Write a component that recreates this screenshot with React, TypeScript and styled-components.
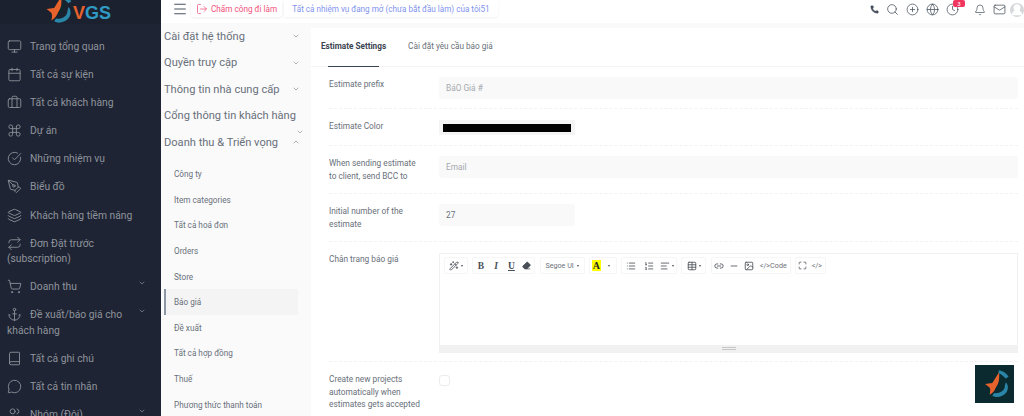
import styled, { createGlobalStyle } from "styled-components";
import {
  Anchor,
  AlignLeft,
  Bell,
  Book,
  Briefcase,
  Calendar,
  ChevronDown,
  ChevronUp,
  CircleCheckBig,
  CirclePlus,
  Clock,
  Command,
  Eraser,
  Globe,
  Image,
  Layers,
  Link2,
  List,
  ListOrdered,
  LogOut,
  Mail,
  Maximize,
  Menu,
  MessageCircle,
  Minus,
  Monitor,
  PenTool,
  Phone,
  Repeat,
  Search,
  ShoppingCart,
  Table,
  UserRound,
  Users,
  Wand2,
} from "lucide-react";

const GlobalStyle = createGlobalStyle`
  html, body {
    margin: 0;
    height: 416px;
    overflow: hidden;
    background: #fafafa;
    font-family: Roboto, "Open Sans", sans-serif;
  }
  * { box-sizing: border-box; }
`;

const FishMark = ({ size }: { size: number }) => (
  <svg width={size} height={size} viewBox="0 0 40 40">
    <path d="M9 20 L17 19 L25 6 C24 14 26 16 21 24 C19 29 16 31 14 32 C15 28 15 26 14 24 Z" fill="#e8622c" />
    <path d="M20 27 C23 20 27 16 27 11 C30 17 26 23 20 27 Z" fill="#0b2a30" />
    <path d="M24 5 C28 5 33 8 35 12 L32 14 C29 11 27 9 24 8 Z" fill="#2a86a8" />
    <path d="M32 18 C36 22 35 30 28 33 C24 35 20 35 17 33 L19 30 C24 31 31 28 31 22 Z" fill="#2a86a8" />
  </svg>
);

const sideItems = [
  { icon: Monitor, label: "Trang tổng quan" },
  { icon: Calendar, label: "Tất cả sự kiện" },
  { icon: Briefcase, label: "Tất cả khách hàng" },
  { icon: Command, label: "Dự án" },
  { icon: CircleCheckBig, label: "Những nhiệm vụ" },
  { icon: PenTool, label: "Biểu đồ" },
  { icon: Layers, label: "Khách hàng tiềm năng" },
  { icon: Repeat, label: "Đơn Đặt trước (subscription)" },
  { icon: ShoppingCart, label: "Doanh thu", arrow: true },
  { icon: Anchor, label: "Đề xuất/báo giá cho khách hàng", arrow: true },
  { icon: Book, label: "Tất cả ghi chú" },
  { icon: MessageCircle, label: "Tất cả tin nhắn" },
  { icon: Users, label: "Nhóm (Đội)", arrow: true },
];

const groups = [
  { label: "Cài đặt hệ thống" },
  { label: "Quyền truy cập" },
  { label: "Thông tin nhà cung cấp" },
  { label: "Cổng thông tin khách hàng", wrapped: true },
];

const subItems = [
  "Công ty",
  "Item categories",
  "Tất cả hoá đơn",
  "Orders",
  "Store",
  "Báo giá",
  "Đề xuất",
  "Tất cả hợp đồng",
  "Thuế",
  "Phương thức thanh toán",
];

const App = () => {
  return (
    <>
      <GlobalStyle />
      <Page>
        <Sidebar>
          <Brand>
            <FishMark size={38} />
            <BrandName>
              <b>V</b>GS
            </BrandName>
          </Brand>
          <SideList>
            {sideItems.map((item) => (
              <SideItem key={item.label}>
                <SideIcon>
                  <item.icon size={15} strokeWidth={1.4} />
                </SideIcon>
                {item.label}
                {item.arrow && (
                  <SideArrow>
                    <ChevronDown size={8} />
                  </SideArrow>
                )}
              </SideItem>
            ))}
          </SideList>
        </Sidebar>
        <Main>
          <TopBar>
            <Burger>
              <Menu size={16} strokeWidth={1.6} />
            </Burger>
            <ClockIn>
              <LogOut size={12} strokeWidth={1.5} />
              Chấm công đi làm
            </ClockIn>
            <TaskLink>Tất cả nhiệm vụ đang mở (chưa bắt đầu làm) của tôi51</TaskLink>
            <TopIcons>
              <Phone size={9} fill="#46505c" strokeWidth={1} />
              <Search size={13} strokeWidth={1.4} />
              <CirclePlus size={13} strokeWidth={1.4} />
              <Globe size={13} strokeWidth={1.4} />
              <ClockWrap>
                <Clock size={13} strokeWidth={1.4} />
                <Badge>3</Badge>
              </ClockWrap>
              <Bell size={12} strokeWidth={1.4} />
              <Mail size={13} strokeWidth={1.4} />
              <Avatar>
                <UserRound size={14} fill="#fff" stroke="#fff" />
              </Avatar>
            </TopIcons>
          </TopBar>
          <Body>
            <SettingsNav>
              {groups.map((g) => (
                <GroupRow key={g.label}>
                  {g.label}
                  <GroupChevron $wrapped={g.wrapped}>
                    <ChevronDown size={8} />
                  </GroupChevron>
                </GroupRow>
              ))}
              <GroupRow>
                Doanh thu & Triển vọng
                <GroupChevron>
                  <ChevronUp size={8} />
                </GroupChevron>
              </GroupRow>
              <SubList>
                {subItems.map((s) => (
                  <SubItem key={s} $active={s === "Báo giá"}>
                    {s}
                  </SubItem>
                ))}
              </SubList>
            </SettingsNav>
            <Card>
              <Tabs>
                <Tab $active>Estimate Settings</Tab>
                <Tab>Cài đặt yêu cầu báo giá</Tab>
              </Tabs>
              <Row $h={42}>
                <Label>Estimate prefix</Label>
                <Field>BáO Giá #</Field>
              </Row>
              <Row $h={37}>
                <Label>Estimate Color</Label>
                <Swatch>
                  <SwatchFill />
                </Swatch>
              </Row>
              <Row $h={48}>
                <Label>When sending estimate to client, send BCC to</Label>
                <Field>Email</Field>
              </Row>
              <Row $h={48}>
                <Label>Initial number of the estimate</Label>
                <Field $short $dark>
                  27
                </Field>
              </Row>
              <Row $h={120}>
                <Label>Chân trang báo giá</Label>
                <Editor>
                  <Toolbar>
                    <ToolGroup $w={24}>
                      <ToolBtn>
                        <Wand2 size={10} />
                        <Caret />
                      </ToolBtn>
                    </ToolGroup>
                    <ToolGroup $w={63}>
                      <ToolBtn>
                        <SerifLetter>B</SerifLetter>
                      </ToolBtn>
                      <ToolBtn>
                        <SerifLetter $italic>I</SerifLetter>
                      </ToolBtn>
                      <ToolBtn>
                        <SerifLetter $underline>U</SerifLetter>
                      </ToolBtn>
                      <ToolBtn>
                        <Eraser size={9} fill="#4a4f57" />
                      </ToolBtn>
                    </ToolGroup>
                    <ToolGroup $w={45}>
                      <ToolText>
                        Segoe UI
                        <Caret />
                      </ToolText>
                    </ToolGroup>
                    <ToolGroup $w={28}>
                      <ToolBtn>
                        <ColorA>A</ColorA>
                      </ToolBtn>
                      <ToolBtn>
                        <Caret />
                      </ToolBtn>
                    </ToolGroup>
                    <ToolGroup $w={56}>
                      <ToolBtn>
                        <List size={10} />
                      </ToolBtn>
                      <ToolBtn>
                        <ListOrdered size={10} />
                      </ToolBtn>
                      <ToolBtn>
                        <AlignLeft size={10} />
                        <Caret />
                      </ToolBtn>
                    </ToolGroup>
                    <ToolGroup $w={25}>
                      <ToolBtn>
                        <Table size={10} />
                        <Caret />
                      </ToolBtn>
                    </ToolGroup>
                    <ToolGroup $w={80}>
                      <ToolBtn>
                        <Link2 size={10} />
                      </ToolBtn>
                      <ToolBtn>
                        <Minus size={10} />
                      </ToolBtn>
                      <ToolBtn>
                        <Image size={10} />
                      </ToolBtn>
                      <ToolText>&lt;/&gt;Code</ToolText>
                    </ToolGroup>
                    <ToolGroup $w={31}>
                      <ToolBtn>
                        <Maximize size={9} />
                      </ToolBtn>
                      <ToolText>&lt;/&gt;</ToolText>
                    </ToolGroup>
                  </Toolbar>
                  <EditArea />
                  <Resizer>
                    <Grip />
                  </Resizer>
                </Editor>
              </Row>
              <Row $h={60} $last>
                <Label>Create new projects automatically when estimates gets accepted</Label>
                <Check />
              </Row>
            </Card>
          </Body>
        </Main>
        <FloatLogo>
          <FishMark size={36} />
        </FloatLogo>
      </Page>
    </>
  );
};

const Page = styled.div`
  display: flex;
  height: 416px;
  overflow: hidden;
  position: relative;
  width: 1024px;
`;

const Sidebar = styled.aside`
  background: #1e2433;
  color: #8e939c;
  flex: 0 0 161px;
  overflow: hidden;
`;

const Brand = styled.div`
  align-items: flex-end;
  background: #1b212e;
  display: flex;
  height: 24px;
  overflow: hidden;
  padding-left: 38px;

  svg {
    flex: none;
    margin-bottom: -4px;
  }
`;

const BrandName = styled.div`
  color: #2f9bc4;
  font-family: "Liberation Sans", sans-serif;
  font-size: 18px;
  font-weight: 700;
  line-height: 22px;
  margin-left: -3px;

  b {
    color: #e8622c;
  }
`;

const SideList = styled.div`
  padding-top: 9px;
`;

const SideItem = styled.div`
  font-size: 10.3px;
  line-height: 15.5px;
  padding: 6px 26px 6.6px 7px;
  position: relative;
`;

const SideIcon = styled.span`
  display: inline-block;
  height: 15px;
  margin-right: 8px;
  vertical-align: -4px;
  width: 15px;
`;

const SideArrow = styled.span`
  position: absolute;
  right: 15px;
  top: 3px;
`;

const Main = styled.div`
  display: flex;
  flex: 1;
  flex-direction: column;
  min-width: 0;
`;

const TopBar = styled.header`
  align-items: flex-start;
  background: #fff;
  display: flex;
  flex: 0 0 23px;
`;

const Burger = styled.div`
  color: #4a5260;
  margin: 1px 0 0 11px;
  width: 19px;
`;

const ClockIn = styled.div`
  align-items: center;
  background: #fff;
  border-radius: 0 0 3px 3px;
  box-shadow: 0 1px 3px rgba(0, 0, 0, 0.08);
  color: #f0527a;
  display: flex;
  font-size: 8.2px;
  gap: 3px;
  height: 17px;
  justify-content: center;
  width: 91px;
`;

const TaskLink = styled.div`
  align-items: center;
  background: #fff;
  border-radius: 0 0 3px 3px;
  box-shadow: 0 1px 3px rgba(0, 0, 0, 0.06);
  color: #7f93ee;
  display: flex;
  font-size: 8.15px;
  height: 17px;
  justify-content: center;
  margin-left: 2px;
  white-space: nowrap;
  width: 214px;
`;

const TopIcons = styled.div`
  align-items: center;
  color: #46505c;
  display: flex;
  gap: 7px;
  height: 19px;
  margin-left: auto;
`;

const ClockWrap = styled.div`
  display: flex;
  margin-right: 8px;
  position: relative;
`;

const Badge = styled.span`
  background: #f0365f;
  border-radius: 2px;
  color: #fff;
  font-size: 6px;
  left: 7px;
  line-height: 7px;
  position: absolute;
  text-align: center;
  top: -3px;
  width: 12px;
`;

const Avatar = styled.div`
  align-items: flex-end;
  background: #d5d7da;
  border-radius: 50%;
  display: flex;
  height: 14px;
  justify-content: center;
  margin-left: -3px;
  overflow: hidden;
  width: 14px;
`;

const Body = styled.div`
  display: flex;
  flex: 1;
  min-height: 0;
`;

const SettingsNav = styled.nav`
  color: #69707a;
  flex: 0 0 150px;
  min-width: 0;
  padding: 0 11px 0 3px;
`;

const GroupRow = styled.div`
  align-items: center;
  display: flex;
  font-size: 11.1px;
  height: 26.5px;
  justify-content: space-between;
  white-space: nowrap;
`;

const GroupChevron = styled.span<{ $wrapped?: boolean }>`
  align-self: ${(p) => (p.$wrapped ? "flex-end" : "center")};
  color: #8a9099;
  display: flex;
  margin-bottom: ${(p) => (p.$wrapped ? "-7px" : "0")};
`;

const SubList = styled.div`
  padding-top: 6px;
  width: 134px;
`;

const SubItem = styled.div<{ $active?: boolean }>`
  align-items: center;
  background: ${(p) => (p.$active ? "#f4f4f4" : "transparent")};
  border-left: 2px solid ${(p) => (p.$active ? "#8c97a5" : "transparent")};
  display: flex;
  font-size: 8.2px;
  height: 25.6px;
  padding-left: 8px;
  white-space: nowrap;
`;

const Card = styled.section`
  background: #fff;
  flex: 1;
  margin-top: 5px;
  min-width: 0;
  padding: 0 6px 0 18px;
`;

const Tabs = styled.div`
  border-bottom: 1px solid #f3f3f3;
  display: flex;
  gap: 22px;
  height: 39px;
  margin: 0 -6px 0 -18px;
  padding: 0 0 0 10px;
`;

const Tab = styled.div<{ $active?: boolean }>`
  align-items: center;
  color: ${(p) => (p.$active ? "#3a4350" : "#69707a")};
  display: flex;
  font-size: 8.2px;
  font-weight: ${(p) => (p.$active ? 700 : 400)};
  padding-bottom: 2px;
  position: relative;

  ${(p) =>
    p.$active &&
    `&::after {
      background: #3a4350;
      bottom: -1px;
      content: "";
      height: 1px;
      left: 7px;
      position: absolute;
      right: 7px;
    }`}
`;

const Row = styled.div<{ $h: number; $last?: boolean }>`
  border-bottom: ${(p) => (p.$last ? "none" : "1px dashed #f2f2f2")};
  display: grid;
  grid-template-columns: 110px 1fr;
  height: ${(p) => p.$h}px;
  padding-top: 10px;
`;

const Label = styled.div`
  color: #69707a;
  font-size: 8.3px;
  line-height: 12.5px;
  padding-top: 1px;
  width: 94px;
`;

const Field = styled.div<{ $short?: boolean; $dark?: boolean }>`
  align-items: center;
  background: #f9f9f9;
  border-radius: 3px;
  color: ${(p) => (p.$dark ? "#6a717b" : "#a5a9af")};
  display: flex;
  font-size: 8.3px;
  height: 22px;
  padding-left: 7px;
  width: ${(p) => (p.$short ? "136px" : "579px")};
`;

const Swatch = styled.div`
  align-items: center;
  background: #f4f4f4;
  display: flex;
  height: 15px;
  justify-content: center;
  margin-top: 1px;
  width: 136px;
`;

const SwatchFill = styled.div`
  background: #000;
  height: 8px;
  width: 128px;
`;

const Editor = styled.div`
  border: 1px solid #f1f1f1;
  display: flex;
  flex-direction: column;
  height: 100px;
  margin-top: 1px;
  width: 579px;
`;

const Toolbar = styled.div`
  display: flex;
  gap: 4.3px;
  height: 24px;
  padding: 3px 0 0 4px;
`;

const ToolGroup = styled.div<{ $w: number }>`
  border: 1px solid #f6f6f6;
  border-radius: 2px;
  display: flex;
  flex: 0 0 ${(p) => p.$w}px;
  height: 17px;
  justify-content: center;
`;

const ToolBtn = styled.div`
  align-items: center;
  color: #4a4f57;
  display: flex;
  flex: 1;
  gap: 2px;
  justify-content: center;
`;

const ToolText = styled.div`
  align-items: center;
  color: #6d727a;
  display: flex;
  flex: none;
  font-size: 7.2px;
  gap: 3px;
  padding: 0 3px;
  white-space: nowrap;
`;

const Caret = styled.span`
  border-left: 1.5px solid transparent;
  border-right: 1.5px solid transparent;
  border-top: 2px solid #4a4f57;
  height: 0;
  width: 0;
`;

const SerifLetter = styled.span<{ $italic?: boolean; $underline?: boolean }>`
  color: #4a4f57;
  font-family: "Liberation Serif", serif;
  font-size: 9.5px;
  font-style: ${(p) => (p.$italic ? "italic" : "normal")};
  font-weight: 700;
  text-decoration: ${(p) => (p.$underline ? "underline" : "none")};
`;

const ColorA = styled.span`
  background: #ffff00;
  color: #222;
  display: block;
  font-family: "Liberation Serif", serif;
  font-size: 10px;
  font-weight: 700;
  line-height: 11px;
  padding: 0 1px;
`;

const EditArea = styled.div`
  flex: 1;
`;

const Resizer = styled.div`
  align-items: center;
  background: #f1f1f1;
  display: flex;
  flex: 0 0 7px;
  justify-content: center;
`;

const Grip = styled.div`
  border-bottom: 1px solid #c6c6c6;
  border-top: 1px solid #c6c6c6;
  height: 3px;
  width: 14px;
`;

const Check = styled.div`
  background: #fff;
  border: 1px solid #ececec;
  border-radius: 3px;
  height: 11px;
  margin-top: 3px;
  width: 11px;
`;

const FloatLogo = styled.div`
  align-items: center;
  background: #0b2a30;
  bottom: 13px;
  display: flex;
  height: 38px;
  justify-content: center;
  position: absolute;
  right: 10px;
  width: 39px;
`;

export default App;
